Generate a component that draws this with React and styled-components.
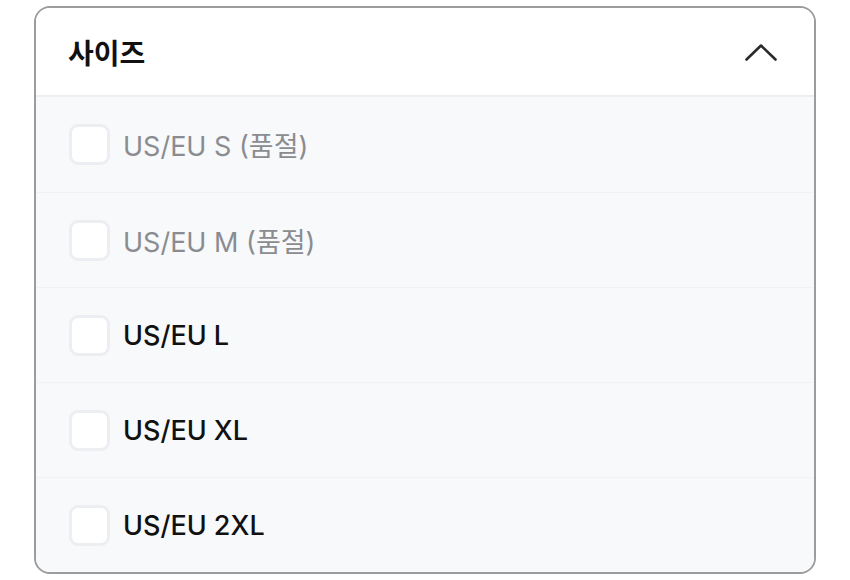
import { useState } from "react";
import styled, { createGlobalStyle } from "styled-components";

const GlobalStyle = createGlobalStyle`
  body {
    margin: 0;
    background: #ffffff;
    font-family: Inter, "Noto Sans CJK KR", sans-serif;
  }
`;

const Page = styled.div`
  padding: 6px 34px 0 34px;
`;

const Card = styled.section`
  width: 782px;
  box-sizing: border-box;
  border: 2px solid #9c9c9c;
  border-radius: 16px;
  overflow: hidden;
  background: #ffffff;
`;

const Header = styled.button`
  width: 100%;
  height: 89px;
  display: flex;
  align-items: center;
  justify-content: space-between;
  padding: 0 36px 0 32px;
  box-sizing: border-box;
  border: none;
  border-bottom: 2px solid #eceef1;
  background: #ffffff;
  cursor: pointer;
  font-family: inherit;
`;

const Title = styled.span`
  font-size: 28px;
  font-weight: 700;
  color: #111111;
  letter-spacing: 0;
`;

const Chevron = styled.svg`
  width: 34px;
  height: 20px;
  transform: ${(p) => (p.$open ? "none" : "rotate(180deg)")};
`;

const List = styled.ul`
  list-style: none;
  margin: 0;
  padding: 0;
  background: #f8f9fb;
`;

const Row = styled.li`
  height: 95px;
  display: flex;
  align-items: center;
  gap: 13px;
  padding-left: 33px;
  box-sizing: border-box;
  border-top: 1px solid #f1f2f5;

  &:first-child {
    border-top: none;
  }
`;

const Box = styled.span`
  width: 41px;
  height: 41px;
  box-sizing: border-box;
  border: 3px solid #eceef1;
  border-radius: 9px;
  background: #ffffff;
  flex-shrink: 0;
`;

const Label = styled.span`
  font-size: 27px;
  font-weight: ${(p) => (p.$soldOut ? 400 : 500)};
  color: ${(p) => (p.$soldOut ? "#8a8c90" : "#111111")};
  letter-spacing: 0;
`;

const sizes = [
  { name: "US/EU S", soldOut: true },
  { name: "US/EU M", soldOut: true },
  { name: "US/EU L" },
  { name: "US/EU XL" },
  { name: "US/EU 2XL" },
];

export default function App() {
  const [open, setOpen] = useState(true);

  return (
    <Page>
      <GlobalStyle />
      <Card>
        <Header onClick={() => setOpen(!open)}>
          <Title>사이즈</Title>
          <Chevron $open={open} viewBox="0 0 34 20" fill="none">
            <path
              d="M2.5 17.5 L17 3.5 L31.5 17.5"
              stroke="#2b2b2b"
              strokeWidth="2.6"
              strokeLinecap="round"
              strokeLinejoin="round"
            />
          </Chevron>
        </Header>
        {open && (
          <List>
            {sizes.map((s) => (
              <Row key={s.name}>
                <Box />
                <Label $soldOut={s.soldOut}>
                  {s.soldOut ? `${s.name} (품절)` : s.name}
                </Label>
              </Row>
            ))}
          </List>
        )}
      </Card>
    </Page>
  );
}
